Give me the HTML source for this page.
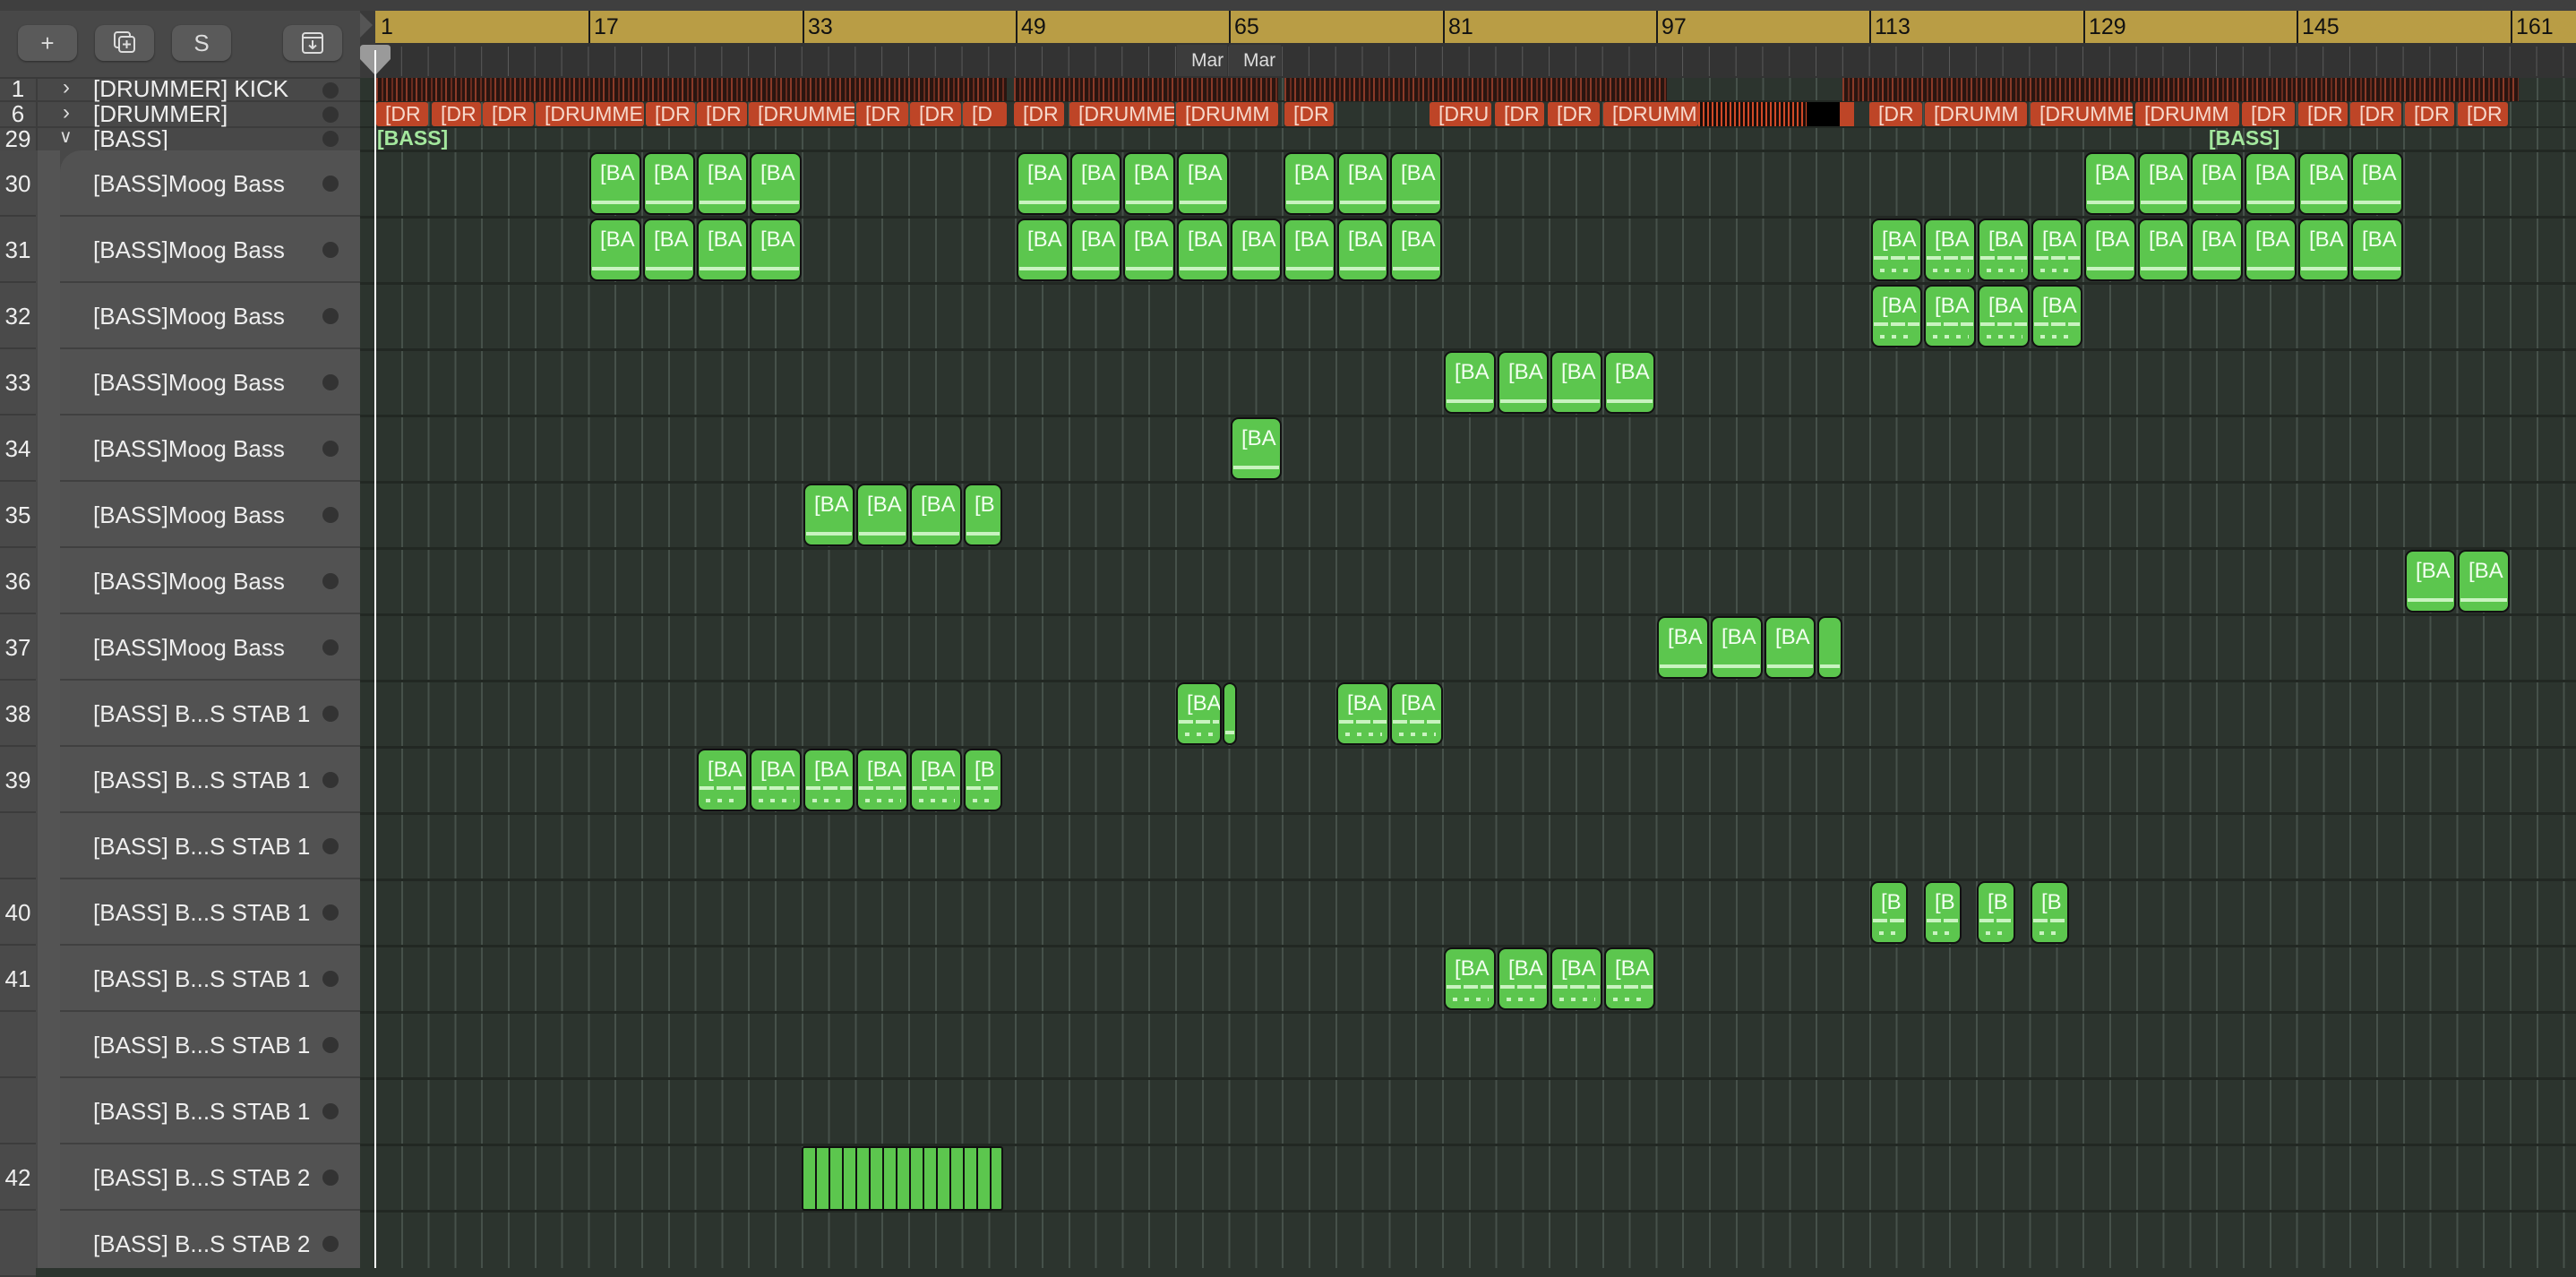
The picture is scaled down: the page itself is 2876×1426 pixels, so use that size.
<!DOCTYPE html>
<html><head><meta charset="utf-8"><style>
*{margin:0;padding:0;box-sizing:border-box}
body{width:2876px;height:1416px;overflow:hidden;background:#2c342e;font-family:"Liberation Sans",sans-serif;position:relative}
.a{position:absolute}
.grid{position:absolute;left:402px;top:87px;width:2474px;height:1329px;background-color:#2c342e;
background-image:repeating-linear-gradient(90deg,transparent 0 16px,#46514a 16px 18px,transparent 18px 29.8px);}
.hl{position:absolute;left:402px;width:2474px;height:3px;background:#222823}
.lp{position:absolute;left:0;top:0;width:402px;height:1416px;background:#484848}
.num{position:absolute;left:0;width:40px;text-align:center;color:#eee;font-size:26px}
.nm{position:absolute;left:104px;color:#eee;font-size:26px;white-space:nowrap}
.dot{position:absolute;left:360px;width:18px;height:18px;border-radius:50%;background:#333}
.trow{position:absolute;left:67px;width:335px;height:74px;background:#525252;border-bottom:2px solid #404040}
.nrow{position:absolute;left:0;width:40px;height:74px;background:#4a4a4a;border-bottom:2px solid #3c3c3c}
.r{position:absolute;height:70px;background:#5cc64e;border:2px solid #111;border-radius:9px;color:#f2fff0;font-size:24px;padding:8px 0 0 10px;overflow:hidden;white-space:nowrap}
.r::after{content:"";position:absolute;left:1px;right:1px;bottom:10px;height:4px;background:#c9f3c0}
.r.d::after{height:16px;background:
linear-gradient(#c9f3c0,#c9f3c0) 0 0/100% 4px no-repeat;
-webkit-mask:repeating-linear-gradient(90deg,#000 0 16px,transparent 16px 19px);background-clip:content-box}
.r.d::before{content:"";position:absolute;left:8px;right:6px;bottom:8px;height:4px;background:repeating-linear-gradient(90deg,#c9f3c0 0 5px,transparent 5px 13px)}
.r.n{padding-left:0}
.o{position:absolute;top:114px;height:27px;background:#be4527;border-radius:3px;color:#f6d8cb;font-size:23px;padding:0 0 0 10px;line-height:27px;overflow:hidden;white-space:nowrap}
.k{position:absolute;top:87px;height:26px;background:#2a1510;background-image:repeating-linear-gradient(90deg,#8a3a28 0 2px,transparent 2px 6px,#6a2c1f 6px 8px,transparent 8px 11px)}
.btn{position:absolute;top:28px;width:66px;height:40px;background:#5a5a5a;border-radius:10px;box-shadow:0 1px 2px #2a2a2a;color:#ddd;text-align:center;font-size:26px;line-height:40px}
.rn{position:absolute;top:12px;font-size:25px;color:#111;line-height:36px}
.rt{position:absolute;top:12px;width:2px;height:36px;background:#1a1a1a}
</style></head><body>
<div class="grid"></div>
<!-- top strip -->
<div class="a" style="left:0;top:0;width:2876px;height:12px;background:#3f3f3f"></div>
<div class="a" style="left:402px;top:12px;width:17px;height:75px;background:#3a3a3a"></div>
<div class="a" style="left:402px;top:14px;width:0;height:0;border-top:14px solid transparent;border-bottom:14px solid transparent;border-left:14px solid #555"></div>
<!-- ruler -->
<div class="a" style="left:419px;top:12px;width:2457px;height:36px;background:#b99d45"></div>
<div class="a" style="left:419px;top:48px;width:2457px;height:39px;background:#333;background-image:repeating-linear-gradient(90deg,transparent 0 28.8px,#5a5a5a 28.8px 30.8px,transparent 30.8px 29.8px);background-size:29.8px 33px;background-position:0 4px;background-repeat:repeat-x"></div>
<div class="rt" style="left:657px"></div><div class="rn" style="left:663px">17</div>
<div class="rn" style="left:425px">1</div>
<div class="rt" style="left:896px"></div><div class="rn" style="left:902px">33</div>
<div class="rt" style="left:1134px"></div><div class="rn" style="left:1140px">49</div>
<div class="rt" style="left:1372px"></div><div class="rn" style="left:1378px">65</div>
<div class="rt" style="left:1611px"></div><div class="rn" style="left:1617px">81</div>
<div class="rt" style="left:1849px"></div><div class="rn" style="left:1855px">97</div>
<div class="rt" style="left:2087px"></div><div class="rn" style="left:2093px">113</div>
<div class="rt" style="left:2326px"></div><div class="rn" style="left:2332px">129</div>
<div class="rt" style="left:2564px"></div><div class="rn" style="left:2570px">145</div>
<div class="rt" style="left:2803px"></div><div class="rn" style="left:2809px">161</div>
<div class="a" style="left:1314px;top:50px;width:56px;height:35px;background:#3c3c3c;color:#ddd;font-size:21px;line-height:35px;padding-left:16px">Mar</div>
<div class="a" style="left:1372px;top:50px;width:58px;height:35px;background:#3c3c3c;color:#ddd;font-size:21px;line-height:35px;padding-left:16px;overflow:hidden">Mar</div>
<!-- row lines -->
<div class="hl" style="top:112px;height:2px"></div>
<div class="hl" style="top:141px;height:2px"></div>
<div class="hl" style="top:167px"></div>
<div class="hl" style="top:241px"></div><div class="hl" style="top:315px"></div><div class="hl" style="top:389px"></div><div class="hl" style="top:463px"></div><div class="hl" style="top:537px"></div><div class="hl" style="top:611px"></div><div class="hl" style="top:685px"></div><div class="hl" style="top:759px"></div><div class="hl" style="top:833px"></div><div class="hl" style="top:907px"></div><div class="hl" style="top:981px"></div><div class="hl" style="top:1055px"></div><div class="hl" style="top:1129px"></div><div class="hl" style="top:1203px"></div><div class="hl" style="top:1277px"></div><div class="hl" style="top:1351px"></div>
<!-- kick -->
<div class="k" style="left:420px;width:704px"></div>
<div class="k" style="left:1132px;width:295px"></div>
<div class="k" style="left:1434px;width:427px"></div>
<div class="k" style="left:2057px;width:755px"></div>
<!-- drummer -->
<div class="o" style="left:420px;width:58px">[DR</div>
<div class="o" style="left:482px;width:55px">[DR</div>
<div class="o" style="left:539px;width:57px">[DR</div>
<div class="o" style="left:598px;width:121px">[DRUMME</div>
<div class="o" style="left:721px;width:55px">[DR</div>
<div class="o" style="left:778px;width:56px">[DR</div>
<div class="o" style="left:836px;width:118px">[DRUMME</div>
<div class="o" style="left:956px;width:58px">[DR</div>
<div class="o" style="left:1016px;width:57px">[DR</div>
<div class="o" style="left:1075px;width:49px">[D</div>
<div class="o" style="left:1132px;width:56px">[DR</div>
<div class="o" style="left:1194px;width:117px">[DRUMME</div>
<div class="o" style="left:1313px;width:114px">[DRUMM</div>
<div class="o" style="left:1434px;width:55px">[DR</div>
<div class="o" style="left:1596px;width:69px">[DRU</div>
<div class="o" style="left:1669px;width:55px">[DR</div>
<div class="o" style="left:1728px;width:58px">[DR</div>
<div class="o" style="left:1790px;width:106px">[DRUMM</div>
<div class="a" style="left:1896px;top:114px;width:121px;height:27px;background:#1a0c08;background-image:repeating-linear-gradient(90deg,#d04a28 0 2px,transparent 2px 5px)"></div>
<div class="a" style="left:2017px;top:114px;width:37px;height:27px;background:#000"></div>
<div class="a" style="left:2054px;top:114px;width:16px;height:27px;background:#be4527"></div>
<div class="o" style="left:2087px;width:59px">[DR</div>
<div class="o" style="left:2149px;width:114px">[DRUMM</div>
<div class="o" style="left:2267px;width:114px">[DRUMME</div>
<div class="o" style="left:2384px;width:116px">[DRUMM</div>
<div class="o" style="left:2503px;width:59px">[DR</div>
<div class="o" style="left:2566px;width:55px">[DR</div>
<div class="o" style="left:2624px;width:57px">[DR</div>
<div class="o" style="left:2685px;width:55px">[DR</div>
<div class="o" style="left:2744px;width:56px">[DR</div>
<!-- bass labels -->
<div class="a" style="left:421px;top:141px;color:#a3e79d;font-weight:bold;font-size:23px;line-height:27px">[BASS]</div>
<div class="a" style="left:2466px;top:141px;color:#a3e79d;font-weight:bold;font-size:23px;line-height:27px">[BASS]</div>

<!-- regions k0 top 170 -->
<div class="r" style="left:658px;top:170px;width:58px">[BA</div>
<div class="r" style="left:718px;top:170px;width:58px">[BA</div>
<div class="r" style="left:778px;top:170px;width:57px">[BA</div>
<div class="r" style="left:837px;top:170px;width:58px">[BA</div>
<div class="r" style="left:1135px;top:170px;width:58px">[BA</div>
<div class="r" style="left:1195px;top:170px;width:57px">[BA</div>
<div class="r" style="left:1254px;top:170px;width:58px">[BA</div>
<div class="r" style="left:1314px;top:170px;width:58px">[BA</div>
<div class="r" style="left:1433px;top:170px;width:58px">[BA</div>
<div class="r" style="left:1493px;top:170px;width:57px">[BA</div>
<div class="r" style="left:1552px;top:170px;width:58px">[BA</div>
<div class="r" style="left:2327px;top:170px;width:58px">[BA</div>
<div class="r" style="left:2387px;top:170px;width:57px">[BA</div>
<div class="r" style="left:2446px;top:170px;width:58px">[BA</div>
<div class="r" style="left:2506px;top:170px;width:58px">[BA</div>
<div class="r" style="left:2566px;top:170px;width:57px">[BA</div>
<div class="r" style="left:2625px;top:170px;width:58px">[BA</div>
<!-- k1 top 244 -->
<div class="r" style="left:658px;top:244px;width:58px">[BA</div>
<div class="r" style="left:718px;top:244px;width:58px">[BA</div>
<div class="r" style="left:778px;top:244px;width:57px">[BA</div>
<div class="r" style="left:837px;top:244px;width:58px">[BA</div>
<div class="r" style="left:1135px;top:244px;width:58px">[BA</div>
<div class="r" style="left:1195px;top:244px;width:57px">[BA</div>
<div class="r" style="left:1254px;top:244px;width:58px">[BA</div>
<div class="r" style="left:1314px;top:244px;width:58px">[BA</div>
<div class="r" style="left:1374px;top:244px;width:57px">[BA</div>
<div class="r" style="left:1433px;top:244px;width:58px">[BA</div>
<div class="r" style="left:1493px;top:244px;width:57px">[BA</div>
<div class="r" style="left:1552px;top:244px;width:58px">[BA</div>
<div class="r d" style="left:2089px;top:244px;width:57px">[BA</div>
<div class="r d" style="left:2148px;top:244px;width:58px">[BA</div>
<div class="r d" style="left:2208px;top:244px;width:58px">[BA</div>
<div class="r d" style="left:2268px;top:244px;width:57px">[BA</div>
<div class="r" style="left:2327px;top:244px;width:58px">[BA</div>
<div class="r" style="left:2387px;top:244px;width:57px">[BA</div>
<div class="r" style="left:2446px;top:244px;width:58px">[BA</div>
<div class="r" style="left:2506px;top:244px;width:58px">[BA</div>
<div class="r" style="left:2566px;top:244px;width:57px">[BA</div>
<div class="r" style="left:2625px;top:244px;width:58px">[BA</div>
<!-- k2 318 -->
<div class="r d" style="left:2089px;top:318px;width:57px">[BA</div>
<div class="r d" style="left:2148px;top:318px;width:58px">[BA</div>
<div class="r d" style="left:2208px;top:318px;width:58px">[BA</div>
<div class="r d" style="left:2268px;top:318px;width:57px">[BA</div>
<!-- k3 392 -->
<div class="r" style="left:1612px;top:392px;width:58px">[BA</div>
<div class="r" style="left:1672px;top:392px;width:57px">[BA</div>
<div class="r" style="left:1731px;top:392px;width:58px">[BA</div>
<div class="r" style="left:1791px;top:392px;width:57px">[BA</div>
<!-- k4 466 -->
<div class="r" style="left:1374px;top:466px;width:57px">[BA</div>
<!-- k5 540 -->
<div class="r" style="left:897px;top:540px;width:57px">[BA</div>
<div class="r" style="left:956px;top:540px;width:58px">[BA</div>
<div class="r" style="left:1016px;top:540px;width:58px">[BA</div>
<div class="r" style="left:1076px;top:540px;width:43px">[B</div>
<!-- k6 614 -->
<div class="r" style="left:2685px;top:614px;width:57px">[BA</div>
<div class="r" style="left:2744px;top:614px;width:58px">[BA</div>
<!-- k7 688 -->
<div class="r" style="left:1850px;top:688px;width:58px">[BA</div>
<div class="r" style="left:1910px;top:688px;width:58px">[BA</div>
<div class="r" style="left:1970px;top:688px;width:57px">[BA</div>
<div class="r n" style="left:2029px;top:688px;width:28px"></div>
<!-- k8 762 -->
<div class="r d" style="left:1313px;top:762px;width:51px">[BA</div>
<div class="r n" style="left:1365px;top:762px;width:16px"></div>
<div class="r d" style="left:1492px;top:762px;width:59px">[BA</div>
<div class="r d" style="left:1552px;top:762px;width:59px">[BA</div>
<!-- k9 836 -->
<div class="r d" style="left:778px;top:836px;width:57px">[BA</div>
<div class="r d" style="left:837px;top:836px;width:58px">[BA</div>
<div class="r d" style="left:897px;top:836px;width:57px">[BA</div>
<div class="r d" style="left:956px;top:836px;width:58px">[BA</div>
<div class="r d" style="left:1016px;top:836px;width:58px">[BA</div>
<div class="r d" style="left:1076px;top:836px;width:43px">[B</div>
<!-- k11 984 -->
<div class="r d" style="left:2088px;top:984px;width:42px">[B</div>
<div class="r d" style="left:2148px;top:984px;width:42px">[B</div>
<div class="r d" style="left:2207px;top:984px;width:43px">[B</div>
<div class="r d" style="left:2267px;top:984px;width:43px">[B</div>
<!-- k12 1058 -->
<div class="r d" style="left:1612px;top:1058px;width:58px">[BA</div>
<div class="r d" style="left:1672px;top:1058px;width:57px">[BA</div>
<div class="r d" style="left:1731px;top:1058px;width:58px">[BA</div>
<div class="r d" style="left:1791px;top:1058px;width:57px">[BA</div>
<!-- k15 1280 thin -->
<div class="a" style="left:895px;top:1280px;width:225px;height:72px;background:#111;border-radius:3px;border:2px solid #111;background-image:repeating-linear-gradient(90deg,#5cc64e 0 13px,#111 13px 15px)"></div>

<!-- playhead -->
<div class="a" style="left:418px;top:50px;width:2px;height:1366px;background:#fff"></div>
<svg class="a" style="left:402px;top:50px" width="34" height="34" viewBox="0 0 34 34"><path d="M4 0H30Q34 0 34 4V16L17 34L0 16V4Q0 0 4 0Z" fill="#9a9a9a"/><rect x="16" y="6" width="2" height="28" fill="#fff"/></svg>

<!-- left panel -->
<div class="lp">
<div class="a" style="left:0;top:0;width:402px;height:12px;background:#3f3f3f"></div>
<div class="btn" style="left:20px">+</div>
<div class="btn" style="left:106px"><svg width="30" height="30" viewBox="0 0 30 30" style="margin-top:5px"><rect x="4" y="3" width="17" height="17" rx="3" fill="none" stroke="#ddd" stroke-width="2"/><rect x="9" y="8" width="17" height="17" rx="3" fill="#5a5a5a" stroke="#ddd" stroke-width="2"/><path d="M17.5 12V21M13 16.5H22" stroke="#ddd" stroke-width="2"/></svg></div>
<div class="btn" style="left:192px">S</div>
<div class="btn" style="left:316px"><svg width="30" height="30" viewBox="0 0 30 30" style="margin-top:5px"><rect x="4" y="4" width="22" height="22" rx="3" fill="none" stroke="#ddd" stroke-width="2"/><path d="M4 9H26M15 12V21M11 17.5L15 21L19 17.5" fill="none" stroke="#ddd" stroke-width="2"/></svg></div>
<div class="a" style="left:0;top:86px;width:402px;height:2px;background:#3a3a3a"></div>
<div class="a" style="left:0;top:112px;width:402px;height:2px;background:#3c3c3c"></div>
<div class="a" style="left:0;top:141px;width:402px;height:2px;background:#3c3c3c"></div>
<div class="a" style="left:40px;top:88px;width:2px;height:80px;background:#3c3c3c"></div>
<div class="num" style="top:84px">1</div><div class="a" style="left:70px;top:84px;color:#ddd;font-size:24px">&#x203A;</div><div class="nm" style="top:84px">[DRUMMER] KICK</div><div class="dot" style="top:92px"></div>
<div class="num" style="top:112px">6</div><div class="a" style="left:70px;top:112px;color:#ddd;font-size:24px">&#x203A;</div><div class="nm" style="top:112px">[DRUMMER]</div><div class="dot" style="top:119px"></div>
<div class="num" style="top:140px">29</div><div class="a" style="left:66px;top:140px;color:#ddd;font-size:20px">&#x2228;</div><div class="nm" style="top:140px">[BASS]</div><div class="dot" style="top:146px"></div>
<div class="a" style="left:42px;top:168px;width:25px;height:1248px;background:#545454"></div>
<div class="a" style="left:67px;top:168px;width:335px;height:1248px;background:#525252;border-top-left-radius:24px"></div>
<div class="nrow" style="top:168px"></div><div class="nrow" style="top:242px"></div><div class="nrow" style="top:316px"></div><div class="nrow" style="top:390px"></div><div class="nrow" style="top:464px"></div><div class="nrow" style="top:538px"></div><div class="nrow" style="top:612px"></div><div class="nrow" style="top:686px"></div><div class="nrow" style="top:760px"></div><div class="nrow" style="top:834px"></div><div class="nrow" style="top:908px"></div><div class="nrow" style="top:982px"></div><div class="nrow" style="top:1056px"></div><div class="nrow" style="top:1130px"></div><div class="nrow" style="top:1204px"></div><div class="nrow" style="top:1278px"></div><div class="nrow" style="top:1352px"></div>
<div class="a" style="left:67px;top:240px;width:335px;height:2px;background:#404040"></div>
<div class="a" style="left:67px;top:314px;width:335px;height:2px;background:#404040"></div>
<div class="a" style="left:67px;top:388px;width:335px;height:2px;background:#404040"></div>
<div class="a" style="left:67px;top:462px;width:335px;height:2px;background:#404040"></div>
<div class="a" style="left:67px;top:536px;width:335px;height:2px;background:#404040"></div>
<div class="a" style="left:67px;top:610px;width:335px;height:2px;background:#404040"></div>
<div class="a" style="left:67px;top:684px;width:335px;height:2px;background:#404040"></div>
<div class="a" style="left:67px;top:758px;width:335px;height:2px;background:#404040"></div>
<div class="a" style="left:67px;top:832px;width:335px;height:2px;background:#404040"></div>
<div class="a" style="left:67px;top:906px;width:335px;height:2px;background:#404040"></div>
<div class="a" style="left:67px;top:980px;width:335px;height:2px;background:#404040"></div>
<div class="a" style="left:67px;top:1054px;width:335px;height:2px;background:#404040"></div>
<div class="a" style="left:67px;top:1128px;width:335px;height:2px;background:#404040"></div>
<div class="a" style="left:67px;top:1202px;width:335px;height:2px;background:#404040"></div>
<div class="a" style="left:67px;top:1276px;width:335px;height:2px;background:#404040"></div>
<div class="a" style="left:67px;top:1350px;width:335px;height:2px;background:#404040"></div>

<div class="num" style="top:190px">30</div><div class="nm" style="top:190px">[BASS]Moog Bass</div><div class="dot" style="top:196px"></div>
<div class="num" style="top:264px">31</div><div class="nm" style="top:264px">[BASS]Moog Bass</div><div class="dot" style="top:270px"></div>
<div class="num" style="top:338px">32</div><div class="nm" style="top:338px">[BASS]Moog Bass</div><div class="dot" style="top:344px"></div>
<div class="num" style="top:412px">33</div><div class="nm" style="top:412px">[BASS]Moog Bass</div><div class="dot" style="top:418px"></div>
<div class="num" style="top:486px">34</div><div class="nm" style="top:486px">[BASS]Moog Bass</div><div class="dot" style="top:492px"></div>
<div class="num" style="top:560px">35</div><div class="nm" style="top:560px">[BASS]Moog Bass</div><div class="dot" style="top:566px"></div>
<div class="num" style="top:634px">36</div><div class="nm" style="top:634px">[BASS]Moog Bass</div><div class="dot" style="top:640px"></div>
<div class="num" style="top:708px">37</div><div class="nm" style="top:708px">[BASS]Moog Bass</div><div class="dot" style="top:714px"></div>
<div class="num" style="top:782px">38</div><div class="nm" style="top:782px">[BASS] B...S STAB 1</div><div class="dot" style="top:788px"></div>
<div class="num" style="top:856px">39</div><div class="nm" style="top:856px">[BASS] B...S STAB 1</div><div class="dot" style="top:862px"></div>
<div class="nm" style="top:930px">[BASS] B...S STAB 1</div><div class="dot" style="top:936px"></div>
<div class="num" style="top:1004px">40</div><div class="nm" style="top:1004px">[BASS] B...S STAB 1</div><div class="dot" style="top:1010px"></div>
<div class="num" style="top:1078px">41</div><div class="nm" style="top:1078px">[BASS] B...S STAB 1</div><div class="dot" style="top:1084px"></div>
<div class="nm" style="top:1152px">[BASS] B...S STAB 1</div><div class="dot" style="top:1158px"></div>
<div class="nm" style="top:1226px">[BASS] B...S STAB 1</div><div class="dot" style="top:1232px"></div>
<div class="num" style="top:1300px">42</div><div class="nm" style="top:1300px">[BASS] B...S STAB 2</div><div class="dot" style="top:1306px"></div>
<div class="nm" style="top:1374px">[BASS] B...S STAB 2</div><div class="dot" style="top:1380px"></div>
</div>
</body></html>
